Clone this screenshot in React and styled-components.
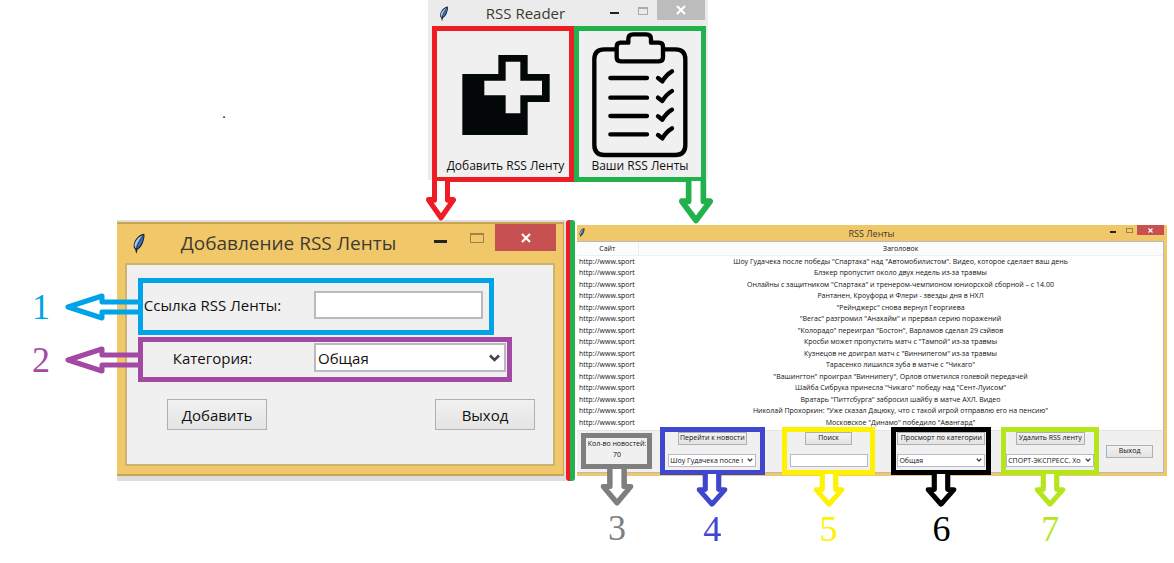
import React from "react";
import styled, { createGlobalStyle, css } from "styled-components";

const GlobalStyle = createGlobalStyle`
  *, *::before, *::after { box-sizing: border-box; }
  body { margin: 0; background: #fff; color: #111; font-family: "Open Sans", "Noto Sans", sans-serif; }
  button, input, select { font: inherit; color: inherit; margin: 0; }
`;

const color = {
  red: "#ee1c25",
  green: "#23b14d",
  cyan: "#00a3e8",
  purple: "#a349a3",
  grey: "#7f7f7f",
  blue: "#3f48cc",
  yellow: "#fff200",
  black: "#000",
  lime: "#b5e61d",
  amber: "#f0c869",
  panel: "#f0f0f0",
};

const Page = styled.main`
  min-width: 1080px;
  padding-bottom: 80px;
`;

const Top = styled.section`
  display: grid;
  grid-template-columns: 428fr 280px 466fr;
  margin-bottom: 40px;
`;

const Dot = styled.span`
  place-self: center;
  padding: 48px 0 0 20px;
  font: 14px/16px "Liberation Serif", serif;
  color: #000;
`;

const Bottom = styled.section`
  display: flex;
  align-items: flex-start;
  padding: 0 7px 0 117px;
`;

/* ---- window chrome ---- */

const ReaderWindow = styled.section`
  height: 180px;
  background: #ebebeb;
`;

const TitleBar = styled.header`
  display: grid;
  grid-template-columns: auto 1fr auto;
  align-items: center;
  justify-items: center;
  color: #3f3a30;
  ${({ $size }) =>
    ({
      reader: css`height: 27px; padding: 0 3px 0 10px; column-gap: 4px; font-size: 15px;`,
      large: css`height: 39px; padding: 0 7px 0 15px; font-size: 19px; h1 { padding-left: 8px; }`,
      small: css`height: 16px; padding: 0 0 0 2px; font-size: 9px; grid-template-columns: 1fr auto 1fr; justify-items: start;`,
    })[$size]}
`;

const Title = styled.h1`
  margin: 0;
  font-size: inherit;
  font-weight: 400;
  line-height: 1;
  white-space: nowrap;
`;

const Controls = styled.div`
  display: flex;
  align-self: start;
  justify-self: end;
`;

const ControlButton = styled.button`
  display: block;
  border: 0;
  padding: 0;
  background: ${({ $bg }) => $bg || "transparent"};
  width: ${({ $w }) => $w}px;
  height: ${({ $h }) => $h}px;
  svg { display: block; margin: auto; }
`;

const Feather = ({ width, height }) => (
  <svg width={width} height={height} viewBox="0 0 36 64" aria-hidden="true">
    <path d="M33 2C22 3 9 13 4 28c-3 9-2 15 3 20l3 13 4-13c9-5 15-16 18-28 2-8 3-14 1-18z" fill="#1b2129" />
    <path d="M30 6C18 11 8 21 5 34c0 5 1 8 4 10C14 30 22 17 30 6z" fill="#a9cdf0" />
    <path d="M32 7C22 19 14 32 12 45c9-5 17-19 20-38z" fill="#3573c4" />
    <path d="M30 6C20 18 12 30 9 46" fill="none" stroke="#2a5a9c" strokeWidth="2" />
  </svg>
);

const WindowControls = ({ size }) => {
  const s = {
    reader: { w: 28, cw: 48, h: 20, icon: 10, bar: 2, close: "#bcbcbc" },
    large: { w: 36, cw: 61, h: 27, icon: 14, bar: 3, close: "#c75050" },
    small: { w: 16, cw: 27, h: 10, icon: 7, bar: 2, close: "#c75050" },
  }[size];
  const small = size === "small";
  const outline = size === "reader" ? "#aaa" : "#9c8346";
  const top = Math.round(s.h / 3);
  return (
    <Controls>
      <ControlButton $w={s.w} $h={s.h} aria-label="Свернуть">
        <svg width={s.icon} height={s.h}>
          <rect y={Math.round(s.h * 0.6)} width={s.icon - 1} height={s.bar} fill="#222" />
        </svg>
      </ControlButton>
      <ControlButton $w={s.w} $h={s.h} aria-label="Развернуть">
        <svg width={s.icon} height={s.h}>
          <rect
            x="0.5"
            y={top + 0.5}
            width={s.icon - 1}
            height={Math.round(s.h * 0.35)}
            fill="none"
            stroke={outline}
          />
          {!small && <rect y={top} width={s.icon} height="2" fill={outline} />}
        </svg>
      </ControlButton>
      <ControlButton $w={s.cw} $h={s.h} $bg={s.close} aria-label="Закрыть">
        <svg width={small ? 5 : 10} height={small ? 5 : 10} viewBox="0 0 10 10">
          <path d="M1 1L9 9M9 1L1 9" stroke="#fff" strokeWidth="2.2" />
        </svg>
      </ControlButton>
    </Controls>
  );
};

const WindowBar = ({ size, title, feather }) => (
  <TitleBar $size={size}>
    <Feather width={feather[0]} height={feather[1]} />
    <Title>{title}</Title>
    <WindowControls size={size} />
  </TitleBar>
);

/* ---- callouts ---- */

const Pointer = styled.div`
  position: absolute;
  z-index: 2;
  display: flex;
  align-items: center;
  color: ${({ $color }) => $color};
  svg { display: block; flex: none; }
  ${({ $side }) =>
    ({
      left: css`right: calc(100% + 5px); top: 50%; transform: translateY(-50%); gap: 15px;`,
      down: css`top: 100%; left: 50%; transform: translateX(-50%); flex-direction: column; gap: 4px;`,
      startCorner: css`top: calc(100% + 4px); left: -11px;`,
      endCorner: css`top: calc(100% + 4px); right: -12px;`,
    })[$side]}
`;

const Numeral = styled.span`
  font: 36px/36px "Liberation Serif", serif;
`;

const DownArrow = ({ width = 31, height = 33 }) => (
  <svg width={width} height={height} viewBox="0 0 30 36" preserveAspectRatio="none" aria-hidden="true">
    <path d="M8.500 0V17H2.500L15 33L27.500 17H21.500V0" fill="#fff" stroke="currentColor" strokeWidth="5" strokeLinejoin="round" />
  </svg>
);

const LeftArrow = () => (
  <svg width="73" height="28" viewBox="0 0 73 28" aria-hidden="true">
    <path d="M73 9H37V3L3 14L37 25V19H73" fill="none" stroke="currentColor" strokeWidth="5" strokeLinejoin="round" />
  </svg>
);

/* ---- reader window ---- */

const Tiles = styled.div`
  display: grid;
  grid-template-columns: 142px 132px;
  padding-left: 4px;
  margin-top: -1px;
`;

const TileFrame = styled.div`
  position: relative;
  display: grid;
  height: 156px;
  border: 5px solid ${({ $color }) => $color};
`;

const Tile = styled.button`
  display: flex;
  flex-direction: column;
  align-items: center;
  justify-content: space-between;
  border: 0;
  padding: 1px 0 4px;
  background: ${color.panel};
  font-size: 12px;
  line-height: 15px;
  white-space: nowrap;
  ${TileFrame}:first-child & { padding-left: 5px; }
`;

const TileArt = styled.span`
  display: grid;
  flex: 1;
  place-items: center;
`;

const PlusArt = () => (
  <svg width="88" height="80" viewBox="126 162 262 240" aria-hidden="true">
    <path d="M126 219H234V162H322V219H388V303H322V402H126z" fill="#040708" />
    <path d="M256 182H300V239H365V283H300V337H256V283H192V239H256z" fill="#f0f0f0" />
  </svg>
);

const ClipboardArt = () => (
  <svg width="96" height="126" viewBox="515 95 288 378" fill="none" stroke="#000" strokeWidth="13" strokeLinecap="round" strokeLinejoin="round" aria-hidden="true">
    <path d="M586 147H552Q522 147 522 177V434Q522 464 552 464H765Q795 464 795 434V177Q795 147 765 147H730" />
    <path d="M599 127H624V116Q624 102 638 102H678Q692 102 692 116V127H716Q728 127 728 139V171Q728 183 716 183H601Q589 183 589 171V139Q589 127 601 127" />
    <path d="M570 233H680M570 292H680M570 347H680M570 402H680" />
    {[233, 292, 348, 404].map((y) => (
      <path key={y} d={`M713 ${y}L726 ${y + 10}Q738 ${y - 10} 755 ${y - 20}`} />
    ))}
  </svg>
);

/* ---- "add feed" window ---- */

const AddWindow = styled.section`
  flex: none;
  width: 449px;
  padding: 2px 2px 5px 0;
  background: #dedede;
`;

const AddFrame = styled.div`
  padding: 0 8px 8px;
  background: ${color.amber};
  border: solid #c8a452;
  border-width: 2px 1px 2px 0;
`;

const AddBar = styled.div`
  margin: 0 -8px;
`;

const AddForm = styled.form`
  height: 203px;
  padding: 13px 0 0 11px;
  background: ${color.panel};
  border: 2px solid #cdb272;
`;

const FieldFrame = styled.div`
  position: relative;
  display: flex;
  align-items: center;
  width: ${({ $wide }) => ($wide ? 374 : 356)}px;
  height: ${({ $wide }) => ($wide ? 45 : 57)}px;
  margin-bottom: 2px;
  padding-bottom: 4px;
  border: 5px solid ${({ $color }) => $color};
  font-size: 15px;
`;

const FieldLabel = styled.label`
  width: 171px;
  padding-right: 32px;
  text-align: center;
  white-space: nowrap;
`;

const inputLook = css`
  border: ${({ $small }) => ($small ? 1 : 2)}px solid #b9babf;
  border-radius: 0;
  background: #fff;
  outline: 0;
`;

const TextInput = styled.input`
  ${inputLook}
  width: ${({ $small }) => ($small ? 78 : 169)}px;
  height: ${({ $small }) => ($small ? 13 : 28)}px;
`;

const SelectWrap = styled.span`
  position: relative;
  display: block;
  width: ${({ $small }) => ($small ? 88 : 192)}px;
  svg {
    position: absolute;
    top: 0;
    bottom: 0;
    right: ${({ $small }) => ($small ? 3 : 6)}px;
    margin: auto;
    pointer-events: none;
  }
`;

const SelectBox = styled.select`
  ${inputLook}
  display: block;
  appearance: none;
  width: 100%;
  height: ${({ $small }) => ($small ? 13 : 29)}px;
  padding: ${({ $small }) => ($small ? "0 12px 0 1px" : "0 24px 0 2px")};
  font-size: ${({ $small }) => ($small ? 7 : 15)}px;
  line-height: ${({ $small }) => ($small ? 11 : 20)}px;
`;

const Select = ({ small, value, ...rest }) => (
  <SelectWrap $small={small}>
    <SelectBox $small={small} defaultValue={value} {...rest}>
      <option>{value}</option>
    </SelectBox>
    <svg width={small ? 6 : 11} height={small ? 4 : 8} viewBox="0 0 11 8" aria-hidden="true">
      <path d="M1 1.5L5.500 6L10 1.500" fill="none" stroke="#444" strokeWidth="2.600" />
    </svg>
  </SelectWrap>
);

const buttonLook = css`
  border: 1px solid #b0b0b0;
  border-radius: 0;
  padding: 0;
  background: linear-gradient(#f1f1f1, #e4e4e4);
  white-space: nowrap;
`;

const FormButtons = styled.div`
  display: flex;
  justify-content: space-between;
  padding: 15px 18px 0 29px;
`;

const FormButton = styled.button`
  ${buttonLook}
  width: 100px;
  height: 31px;
  font-size: 15px;
  line-height: 20px;
`;

const Divider = styled.div`
  flex: none;
  align-self: stretch;
  width: 9px;
  margin-right: 2px;
  border-radius: 3px;
  background: linear-gradient(to right, ${color.red} 4px, ${color.green} 4px);
`;

/* ---- feed list window ---- */

const ListWindow = styled.section`
  flex: 1;
  min-width: 0;
  margin-top: 5px;
  background: ${color.amber};
  padding: 0 3px 3px 0;
`;

const ListBody = styled.div`
  border: solid #b9b9b9;
  border-width: 1px 1px 1px 0;
  background: ${color.panel};
`;

const TableArea = styled.div`
  padding-bottom: 2px;
  background: #fff;
`;

const NewsTable = styled.table`
  width: 100%;
  table-layout: fixed;
  border-collapse: collapse;
  font-size: 7px;
  line-height: 11px;
  text-align: center;
  th, td { padding: 0; white-space: nowrap; overflow: hidden; }
  th { height: 13px; font-weight: 400; background: #fcfcfc; border-bottom: 1px solid #eef2f6; }
  th:first-child { width: 61px; border-right: 1px solid #e6eef5; }
  td:first-child { text-align: left; padding-left: 2px; }
  tbody tr { height: 11px; }
  tbody tr:nth-child(even) { height: 12px; }
`;

const Toolbar = styled.div`
  display: grid;
  grid-template-columns: 78fr 113fr 120fr 106fr 112fr 57fr;
  justify-items: center;
  padding-left: 1px;
  border-top: 1px solid #e4e4e4;
  font-size: 7px;
`;

const ToolGroup = styled.div`
  position: relative;
  display: flex;
  flex-direction: column;
  align-items: center;
  gap: 9px;
  width: ${({ $w }) => $w}px;
  height: 41px;
  padding-top: ${({ $short }) => ($short ? 2 : 1)}px;
  &::before {
    content: "";
    position: absolute;
    inset: ${({ $short }) => ($short ? "2px 0 3px" : "-4px 0 -3px")};
    border: 5px solid ${({ $color }) => $color};
    pointer-events: none;
  }
`;

const DownPointer = styled(Pointer)`
  margin-top: ${({ $short }) => ($short ? -3 : 2)}px;
`;

const ToolButton = styled.button`
  ${buttonLook}
  width: ${({ $w }) => $w}px;
  height: 13px;
  line-height: 10px;
  align-self: ${({ $alone }) => ($alone ? "center" : "auto")};
  justify-self: start;
`;

const Count = styled.p`
  margin: 0;
  padding-top: 5px;
  line-height: 11px;
  text-align: center;
  white-space: nowrap;
`;

const headlines = [
  'Шоу Гудачека после победы "Спартака" над "Автомобилистом". Видео, которое сделает ваш день',
  "Блэкер пропустит около двух недель из-за травмы",
  'Онлайны с защитником "Спартака" и тренером-чемпионом юниорской сборной – с 14.00',
  "Рантанен, Кроуфорд и Флери - звезды дня в НХЛ",
  '"Рейнджерс" снова вернул Георгиева',
  '"Вегас" разгромил "Анахайм" и прервал серию поражений',
  '"Колорадо" переиграл "Бостон", Варламов сделал 29 сэйвов',
  'Кросби может пропустить матч с "Тампой" из-за травмы',
  'Кузнецов не доиграл матч с "Виннипегом" из-за травмы',
  'Тарасенко лишился зуба в матче с "Чикаго"',
  '"Вашингтон" проиграл "Виннипегу", Орлов отметился голевой передачей',
  'Шайба Сибрука принесла "Чикаго" победу над "Сент-Луисом"',
  'Вратарь "Питтсбурга" забросил шайбу в матче АХЛ. Видео',
  'Николай Прохоркин: "Уже сказал Дацюку, что с такой игрой отправлю его на пенсию"',
  'Московское "Динамо" победило "Авангард"',
];

const Tool = ({ width, tone, number, short, arrow, children }) => (
  <ToolGroup $w={width} $color={tone} $short={short}>
    {children}
    <DownPointer $side="down" $color={tone} $short={short}>
      <DownArrow width={arrow} height={short ? 37 : 33} />
      <Numeral>{number}</Numeral>
    </DownPointer>
  </ToolGroup>
);

export default function App() {
  return (
    <Page>
      <GlobalStyle />
      <Top>
        <Dot>.</Dot>
        <ReaderWindow>
          <WindowBar size="reader" title="RSS Reader" feather={[12, 16]} />
          <Tiles>
            <TileFrame $color={color.red}>
              <Tile>
                <TileArt><PlusArt /></TileArt>
                Добавить RSS Ленту
              </Tile>
              <Pointer $side="startCorner" $color={color.red}><DownArrow width={30} height={40} /></Pointer>
            </TileFrame>
            <TileFrame $color={color.green}>
              <Tile>
                <TileArt><ClipboardArt /></TileArt>
                Ваши RSS Ленты
              </Tile>
              <Pointer $side="endCorner" $color={color.green}><DownArrow width={34} height={43} /></Pointer>
            </TileFrame>
          </Tiles>
        </ReaderWindow>
      </Top>

      <Bottom>
        <AddWindow>
          <AddFrame>
            <AddBar><WindowBar size="large" title="Добавление RSS Ленты" feather={[14, 22]} /></AddBar>
            <AddForm onSubmit={(e) => e.preventDefault()}>
              <FieldFrame $color={color.cyan}>
                <FieldLabel htmlFor="feed-url">Ссылка RSS Ленты:</FieldLabel>
                <TextInput id="feed-url" type="text" />
                <Pointer $side="left" $color={color.cyan}><Numeral>1</Numeral><LeftArrow /></Pointer>
              </FieldFrame>
              <FieldFrame $wide $color={color.purple}>
                <FieldLabel htmlFor="feed-category">Категория:</FieldLabel>
                <Select id="feed-category" value="Общая" />
                <Pointer $side="left" $color={color.purple}><Numeral>2</Numeral><LeftArrow /></Pointer>
              </FieldFrame>
              <FormButtons>
                <FormButton type="submit">Добавить</FormButton>
                <FormButton type="button">Выход</FormButton>
              </FormButtons>
            </AddForm>
          </AddFrame>
        </AddWindow>
        <Divider />
        <ListWindow>
          <WindowBar size="small" title="RSS Ленты" feather={[6, 10]} />
          <ListBody>
            <TableArea>
              <NewsTable>
                <thead>
                  <tr><th>Сайт</th><th>Заголовок</th></tr>
                </thead>
                <tbody>
                  {headlines.map((text) => (
                    <tr key={text}><td>http://www.sport</td><td>{text}</td></tr>
                  ))}
                </tbody>
              </NewsTable>
            </TableArea>
            <Toolbar>
              <Tool width={71} tone={color.grey} number="3" arrow={33} short>
                <Count>Кол-во новостей:<br />70</Count>
              </Tool>
              <Tool width={105} tone={color.blue} number="4">
                <ToolButton $w={69}>Перейти к новости</ToolButton>
                <Select small value="Шоу Гудачека после победы" aria-label="Новость" />
              </Tool>
              <Tool width={93} tone={color.yellow} number="5">
                <ToolButton $w={47}>Поиск</ToolButton>
                <TextInput $small type="text" aria-label="Поиск" />
              </Tool>
              <Tool width={100} tone={color.black} number="6">
                <ToolButton $w={88}>Просморт по категории</ToolButton>
                <Select small value="Общая" aria-label="Категория" />
              </Tool>
              <Tool width={98} tone={color.lime} number="7">
                <ToolButton $w={69}>Удалить RSS ленту</ToolButton>
                <Select small value="СПОРТ-ЭКСПРЕСС. Хоккей" aria-label="RSS лента" />
              </Tool>
              <ToolButton $w={47} $alone>Выход</ToolButton>
            </Toolbar>
          </ListBody>
        </ListWindow>
      </Bottom>
    </Page>
  );
}
